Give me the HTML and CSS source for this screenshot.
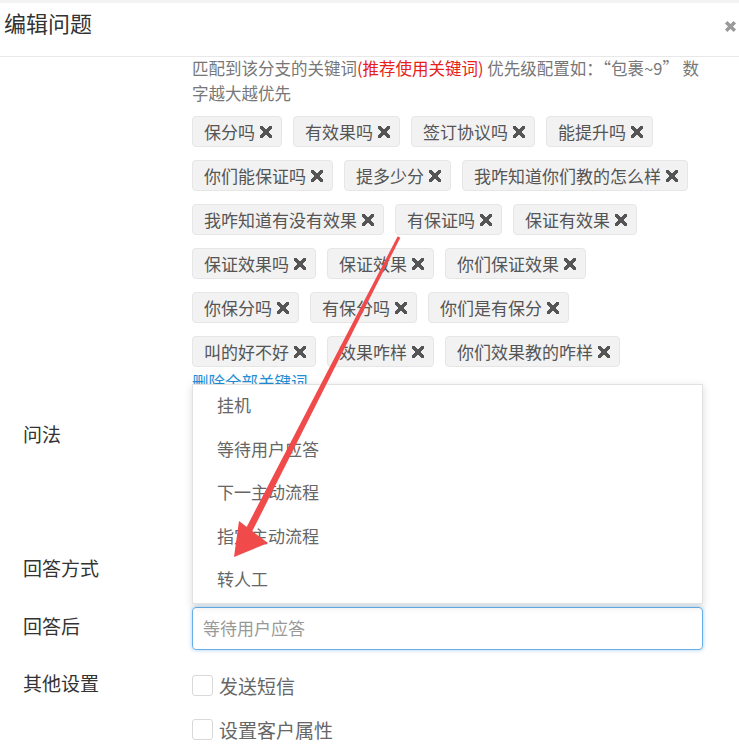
FILE: index.html
```html
<!DOCTYPE html>
<html lang="zh-CN">
<head>
    <meta charset="UTF-8">
    <meta name="viewport" content="width=device-width, initial-scale=1.0">
    <title>编辑问题</title>
    <link rel="stylesheet" href="styles.css">
</head>
<body>

    <div class="dialog">
        <!-- Header -->
        <div class="dialog-header">
            <div class="dialog-title">编辑问题</div>
            <span class="close">
                <svg width="13" height="13" viewBox="0 0 12 12"><path d="M2 2 L10 10 M10 2 L2 10" stroke="#9a9a9a" stroke-width="3.2"/></svg>
            </span>
        </div>

        <div class="dialog-body">
            <!-- Keywords -->
            <div class="form-row">
                <div class="form-label"></div>
                <div class="form-field">
                    <p class="help">匹配到该分支的关键词<span class="red">(推荐使用关键词)</span> 优先级配置如：“包裹~9” 数字越大越优先</p>
                    <div class="tags">
                        <span class="tag">保分吗<i class="x"></i></span>
                        <span class="tag">有效果吗<i class="x"></i></span>
                        <span class="tag">签订协议吗<i class="x"></i></span>
                        <span class="tag">能提升吗<i class="x"></i></span>
                        <span class="tag">你们能保证吗<i class="x"></i></span>
                        <span class="tag">提多少分<i class="x"></i></span>
                        <span class="tag">我咋知道你们教的怎么样<i class="x"></i></span>
                        <span class="tag">我咋知道有没有效果<i class="x"></i></span>
                        <span class="tag">有保证吗<i class="x"></i></span>
                        <span class="tag">保证有效果<i class="x"></i></span>
                        <span class="tag">保证效果吗<i class="x"></i></span>
                        <span class="tag">保证效果<i class="x"></i></span>
                        <span class="tag">你们保证效果<i class="x"></i></span>
                        <span class="tag">你保分吗<i class="x"></i></span>
                        <span class="tag">有保分吗<i class="x"></i></span>
                        <span class="tag">你们是有保分<i class="x"></i></span>
                        <span class="tag">叫的好不好<i class="x"></i></span>
                        <span class="tag">效果咋样<i class="x"></i></span>
                        <span class="tag">你们效果教的咋样<i class="x"></i></span>
                    </div>
                    <a class="del-all" href="#">删除全部关键词</a>
                </div>
            </div>

            <div class="form-row row-ask">
                <div class="form-label">问法</div>
                <div class="form-field">
                    <div class="textarea"></div>
                </div>
            </div>

            <div class="form-row">
                <div class="form-label">回答方式</div>
                <div class="form-field">
                    <div class="select-box"></div>
                </div>
            </div>

            <div class="form-row row-after">
                <div class="form-label">回答后</div>
                <div class="form-field select-wrap">
                    <ul class="dropdown">
                        <li>挂机</li>
                        <li>等待用户应答</li>
                        <li>下一主动流程</li>
                        <li>指定主动流程</li>
                        <li>转人工</li>
                    </ul>
                    <div class="input focus">等待用户应答</div>
                </div>
            </div>

            <div class="form-row">
                <div class="form-label">其他设置</div>
                <div class="form-field checks">
                    <label class="check"><span class="box"></span>发送短信</label>
                    <label class="check"><span class="box"></span>设置客户属性</label>
                </div>
            </div>
        </div>

        <!-- Red arrow drawn over the screenshot -->
        <svg class="arrow" width="739" height="756" viewBox="0 0 739 756">
            <polygon points="400.3,237.7 397.7,236.3 245.9,528.4 252.1,531.6" fill="#f04a4a"/>
            <polygon points="234,557 239,521 268,543" fill="#f04a4a"/>
        </svg>
    </div>

</body>
</html>
```

FILE: styles.css
```css
body {
    margin: 0;
    padding: 0;
    background: #fff;
    font-family: "Noto Sans CJK SC", "Liberation Sans", sans-serif;
    color: #333;
}

.dialog {
    position: relative;
    width: 739px;
    height: 756px;
    overflow: hidden;
    border-top: 3px solid #f3f3f3;
    box-sizing: border-box;
}

.dialog-header {
    display: flex;
    align-items: flex-start;
    justify-content: space-between;
    height: 54px;
    box-sizing: border-box;
    border-bottom: 1px solid #e8e8e8;
    padding: 4px 2px 0 4px;
}

.dialog-title {
    font-size: 22px;
    line-height: 30px;
    color: #333;
}

.close {
    display: flex;
    margin-top: 13px;
}

.dialog-body {
    padding-right: 36px;
}

.form-row {
    display: grid;
    grid-template-columns: 192px 1fr;
    margin-bottom: 16px;
}

.form-label {
    padding-left: 23px;
    font-size: 19px;
    line-height: 38px;
    color: #333;
}

.form-field {
    min-width: 0;
}

.help {
    margin: -1px 0 0;
    font-size: 16.5px;
    line-height: 25px;
    color: #777;
}

.red {
    color: #e8201c;
}

.tags {
    display: flex;
    flex-wrap: wrap;
    gap: 13px 11px;
    margin-top: 10px;
}

.tag {
    display: inline-flex;
    align-items: center;
    height: 31px;
    box-sizing: border-box;
    padding: 0 9px 0 11px;
    background: #f2f2f2;
    border: 1px solid #e6e6e6;
    border-radius: 4px;
    font-size: 17px;
    color: #555;
}

.x {
    display: inline-block;
    width: 12px;
    height: 12px;
    margin-left: 5px;
    background:
        linear-gradient(45deg, transparent 40%, #555 40%, #555 60%, transparent 60%),
        linear-gradient(-45deg, transparent 40%, #555 40%, #555 60%, transparent 60%);
}

.del-all {
    display: block;
    margin-top: 3px;
    font-size: 16.5px;
    line-height: 25px;
    color: #1f8fd6;
    text-decoration: none;
}

.row-ask {
    margin-top: 20px;
}

.textarea {
    height: 118px;
}

.select-box {
    height: 42px;
}

.select-wrap {
    position: relative;
}

.row-after {
    margin-bottom: 14px;
}

.dropdown {
    position: absolute;
    left: 0;
    right: 0;
    bottom: calc(100% + 3px);
    margin: 0;
    padding: 0;
    list-style: none;
    background: #fff;
    border: 1px solid #e2e2e2;
    box-shadow: 0 2px 8px rgba(0, 0, 0, 0.15);
    z-index: 2;
}

.dropdown li {
    height: 43.6px;
    line-height: 39px;
    padding-left: 24px;
    font-size: 17px;
    color: #666;
}

.input {
    height: 43px;
    box-sizing: border-box;
    padding: 0 10px;
    line-height: 39px;
    border: 1px solid #ccc;
    border-radius: 4px;
    font-size: 17px;
    color: #999;
}

.input.focus {
    border-color: #66afe9;
    box-shadow: 0 0 4px rgba(102, 175, 233, 0.6);
}

.checks {
    display: flex;
    flex-direction: column;
    gap: 2px;
}

.check {
    display: flex;
    align-items: center;
    height: 42px;
    font-size: 19px;
    color: #666;
}

.box {
    width: 21px;
    height: 21px;
    box-sizing: border-box;
    border: 1px solid #d9d9d9;
    border-radius: 3px;
    margin-right: 6px;
}

.arrow {
    position: absolute;
    top: -3px;
    left: 0;
    pointer-events: none;
    z-index: 5;
}
```
